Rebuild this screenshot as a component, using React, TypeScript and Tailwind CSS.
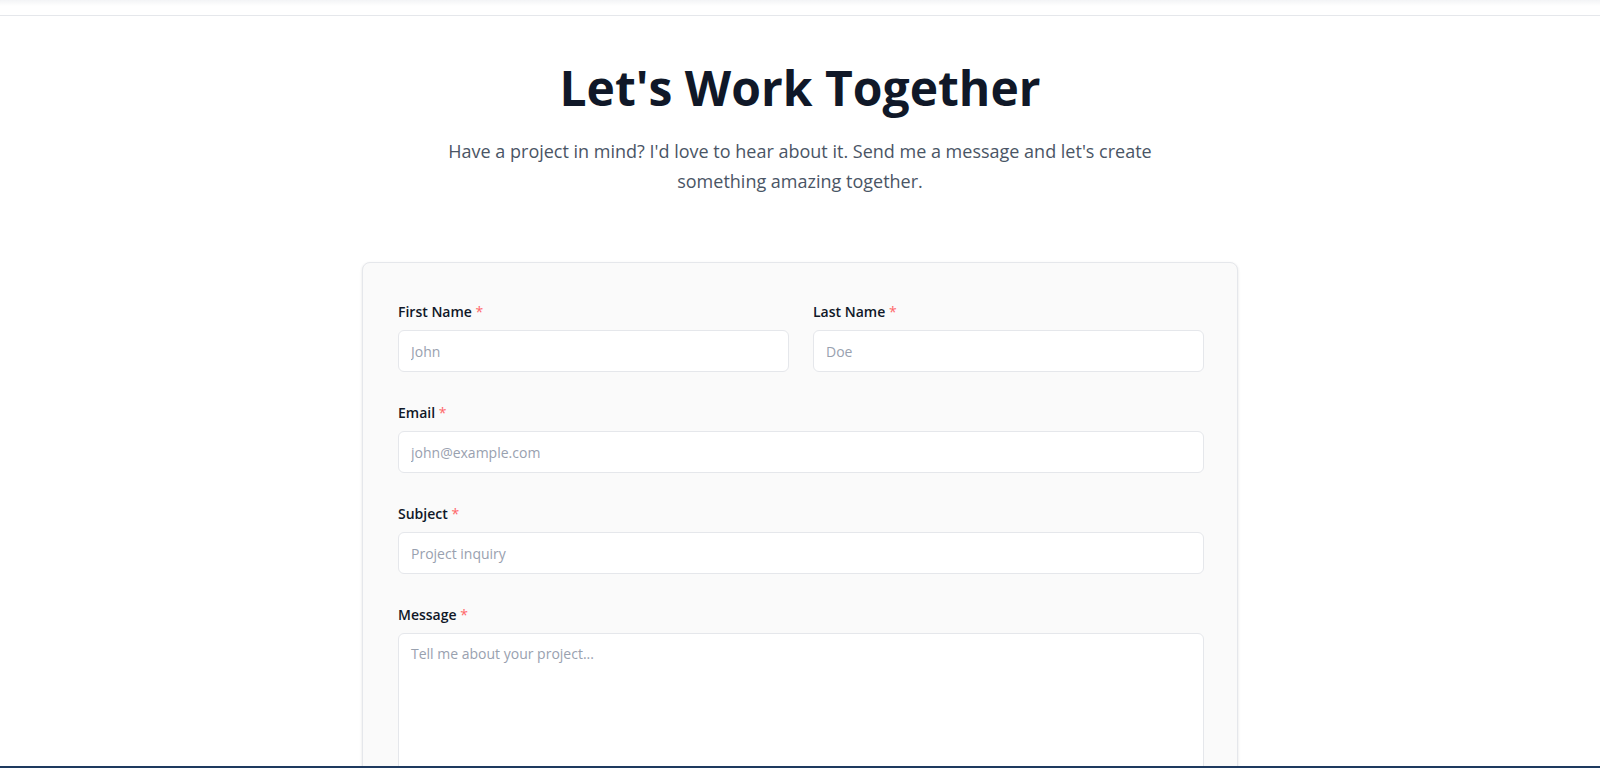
import React from "react";

function Label({ text }: { text: string }) {
  return (
    <label className="mb-2 block text-sm leading-5 font-semibold text-gray-900">
      {text} <span className="font-normal text-red-400">*</span>
    </label>
  );
}

const inputCls =
  "block h-[42px] w-full rounded-md border border-gray-200 bg-white px-3 text-sm text-gray-900 placeholder:text-gray-400 outline-none";

export default function App() {
  return (
    <div
      className="flex h-[768px] w-full flex-col overflow-hidden bg-white"
      style={{ fontFamily: '"Open Sans", "Noto Sans", "Liberation Sans", sans-serif' }}
    >
      <div className="h-4 shrink-0 border-b border-gray-200 bg-gradient-to-b from-gray-100 to-white to-40%" />
      <main className="flex-1 overflow-hidden">
        <section className="mx-auto flex max-w-3xl flex-col items-center pt-12 text-center">
          <h1 className="text-5xl leading-none font-bold text-gray-900">Let's Work Together</h1>
          <p className="mt-6 text-lg leading-[30px] text-gray-600">
            Have a project in mind? I'd love to hear about it. Send me a message and let's create
            something amazing together.
          </p>
        </section>
        <div className="mx-auto mt-[66px] w-[876px] rounded-lg border border-gray-200 bg-[#fafafa] pt-[39px] pr-[33px] pb-9 pl-[35px] shadow-sm">
          <form className="flex flex-col gap-[31px]">
            <div className="grid grid-cols-2 gap-6">
              <div>
                <Label text="First Name" />
                <input className={inputCls} placeholder="John" />
              </div>
              <div>
                <Label text="Last Name" />
                <input className={inputCls} placeholder="Doe" />
              </div>
            </div>
            <div>
              <Label text="Email" />
              <input className={inputCls} placeholder="john@example.com" />
            </div>
            <div>
              <Label text="Subject" />
              <input className={inputCls} placeholder="Project inquiry" />
            </div>
            <div>
              <Label text="Message" />
              <textarea
                rows={6}
                className="block w-full resize-none rounded-md border border-gray-200 bg-white px-3 py-2.5 text-sm text-gray-900 placeholder:text-gray-400 outline-none"
                placeholder="Tell me about your project..."
              />
            </div>
            <button
              type="button"
              className="h-12 w-full rounded-md bg-gray-900 text-sm font-semibold text-white"
            >
              Send Message
            </button>
          </form>
        </div>
      </main>
      <div className="h-[2px] shrink-0 bg-[#1e3a5f]" />
    </div>
  );
}
